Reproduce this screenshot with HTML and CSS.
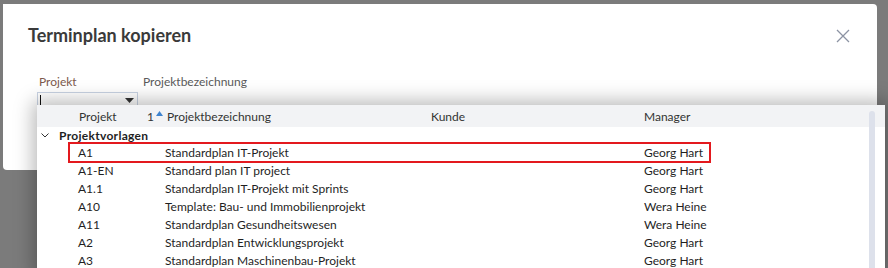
FILE: index.html
```html
<!DOCTYPE html>
<html lang="de">
<head>
<meta charset="utf-8">
<link rel="stylesheet" href="styles.css">
</head>
<body>
<div class="dialog">
  <div class="dialog-head">
    <h1 class="title">Terminplan kopieren</h1>
    <svg class="close" width="14" height="14" viewBox="0 0 14 14"><path d="M1 1L13 13M13 1L1 13" stroke="#8c93a3" stroke-width="1.3" fill="none"/></svg>
  </div>
  <div class="fields">
    <div class="field f-projekt">
      <label class="label label-accent">Projekt</label>
      <div class="combo"><span class="caret"></span><svg class="tri" width="9" height="5" viewBox="0 0 9 5"><path d="M0 0H9L4.5 5Z" fill="#333"/></svg></div>
    </div>
    <div class="field f-bez">
      <label class="label">Projektbezeichnung</label>
    </div>
  </div>
</div>

<div class="dropdown">
  <div class="thead row">
    <div class="c1 th-center">Projekt</div>
    <div class="c2"><span class="sortnum">1</span><svg class="sortarrow" width="7" height="5" viewBox="0 0 7 5"><path d="M0 5L3.5 0L7 5Z" fill="#3f84cf"/></svg>Projektbezeichnung</div>
    <div class="c3">Kunde</div>
    <div class="c4">Manager</div>
  </div>
  <div class="group">
    <svg class="chev" width="8" height="5" viewBox="0 0 8 5"><path d="M0.5 0.5L4 4L7.5 0.5" stroke="#333" stroke-width="1" fill="none"/></svg>
    <span>Projektvorlagen</span>
  </div>
  <div class="row"><div class="c1">A1</div><div class="c2">Standardplan IT-Projekt</div><div class="c3"></div><div class="c4">Georg Hart</div></div>
  <div class="row"><div class="c1">A1-EN</div><div class="c2">Standard plan IT project</div><div class="c3"></div><div class="c4">Georg Hart</div></div>
  <div class="row"><div class="c1">A1.1</div><div class="c2">Standardplan IT-Projekt mit Sprints</div><div class="c3"></div><div class="c4">Georg Hart</div></div>
  <div class="row"><div class="c1">A10</div><div class="c2">Template: Bau- und Immobilienprojekt</div><div class="c3"></div><div class="c4">Wera Heine</div></div>
  <div class="row"><div class="c1">A11</div><div class="c2">Standardplan Gesundheitswesen</div><div class="c3"></div><div class="c4">Wera Heine</div></div>
  <div class="row"><div class="c1">A2</div><div class="c2">Standardplan Entwicklungsprojekt</div><div class="c3"></div><div class="c4">Georg Hart</div></div>
  <div class="row"><div class="c1">A3</div><div class="c2">Standardplan Maschinenbau-Projekt</div><div class="c3"></div><div class="c4">Georg Hart</div></div>
  <div class="scrollbar"></div>
  <div class="highlight"></div>
</div>
</body>
</html>
```

FILE: styles.css
```css
* { box-sizing: border-box; }
html, body { margin: 0; padding: 0; }
body {
  width: 888px;
  height: 268px;
  overflow: hidden;
  background: #7b7b7b;
  font-family: Lato, "Open Sans", sans-serif;
  color: #1f1f1f;
  position: relative;
  padding-top: 4px;
}
.dialog {
  margin-left: 3px;
  width: 874px;
  height: 166px;
  background: #fff;
  border-radius: 0 4px 4px 4px;
}
.dialog-head {
  display: flex;
  align-items: center;
  justify-content: space-between;
  padding: 17px 27px 0 25px;
  height: 44px;
}
.title {
  margin: 0;
  font-size: 18px;
  font-weight: 700;
  color: #3a3a3a;
}
.close { display: block; margin-top: 3px; }
.fields {
  display: flex;
  padding: 26px 0 0 34px;
}
.field { display: flex; flex-direction: column; }
.f-projekt { width: 104px; }
.label {
  font-size: 12px;
  color: #5a5a5a;
  line-height: 16px;
  padding-left: 2px;
}
.label-accent { color: #7d5a4c; }
.combo {
  margin-top: 2px;
  width: 101px;
  height: 16px;
  border: 1px solid #c9d3e3;
  border-bottom: none;
  display: flex;
  align-items: center;
  justify-content: space-between;
  padding: 0 3px 0 2px;
}
.caret { width: 1px; height: 12px; background: #111; }
.tri { display: block; }

.dropdown {
  position: absolute;
  left: 37px;
  top: 105px;
  width: 848px;
  height: 170px;
  background: #fff;
  box-shadow: 0 0 18px 4px rgba(0,0,0,0.28);
  font-size: 12px;
}
.row {
  display: flex;
  align-items: center;
  height: 18px;
  white-space: nowrap;
}
.thead {
  height: 22px;
  background: #f2f3f5;
  color: #333;
}
.c1 { width: 110px; padding-left: 41px; }
.th-center { padding-left: 42px; }
.c2 { width: 265px; display: flex; align-items: center; }
.row .c2 { padding-left: 18px; }
.thead .c2 { padding-left: 0; }
.sortnum { margin-right: 1px; }
.sortarrow { margin: 0 4px 6px 1px; display: block; }
.c3 { width: 232px; padding-left: 19px; }
.c4 { padding-left: 0; }
.group {
  display: flex;
  align-items: center;
  height: 16px;
  font-weight: 700;
  letter-spacing: 0.3px;
  padding-left: 4px;
}
.chev { margin-right: 10px; display: block; }
.scrollbar {
  position: absolute;
  left: 832px;
  top: 6px;
  width: 6px;
  height: 170px;
  background: #dde1eb;
  border-radius: 3px 3px 0 0;
}
.highlight {
  position: absolute;
  left: 31px;
  top: 37px;
  width: 643px;
  height: 21px;
  border: 2px solid #e3191e;
}
```
